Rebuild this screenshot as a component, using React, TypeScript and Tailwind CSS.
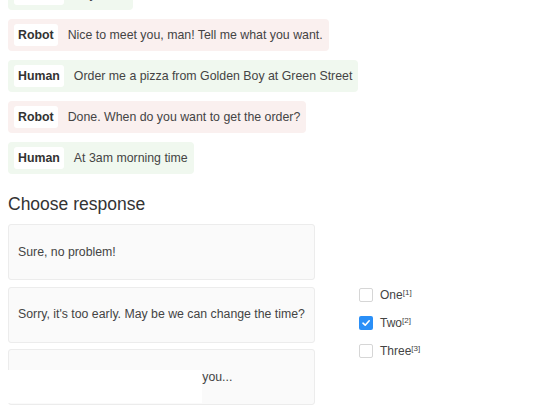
import React from "react";

type Msg = { who: "Human" | "Robot"; text: string };

const messages: Msg[] = [
  { who: "Human", text: "Hey there" },
  { who: "Robot", text: "Nice to meet you, man! Tell me what you want." },
  { who: "Human", text: "Order me a pizza from Golden Boy at Green Street" },
  { who: "Robot", text: "Done. When do you want to get the order?" },
  { who: "Human", text: "At 3am morning time" },
];

const responses = [
  "Sure, no problem!",
  "Sorry, it's too early. May be we can change the time?",
  "Ok, we will bring it at 3am. Thank you...",
];

const options = [
  { label: "One", n: 1, checked: false },
  { label: "Two", n: 2, checked: true },
  { label: "Three", n: 3, checked: false },
];

function Bubble({ msg }: { msg: Msg }) {
  const bg = msg.who === "Robot" ? "bg-[#faf0ef]" : "bg-[#f0f8ef]";
  return (
    <div className={`inline-flex items-center self-start h-8 pl-1.5 pr-1.5 rounded ${bg}`}>
      <span className="bg-white rounded-[3px] h-[22px] flex items-center px-[4px] text-[12.35px] font-bold text-[#333]">
        {msg.who}
      </span>
      <span className="ml-2.5 text-[12.35px] text-[#444]">{msg.text}</span>
    </div>
  );
}

export default function App() {
  return (
    <div className="w-[552px] h-[408px] overflow-hidden bg-white px-2 font-['Liberation_Sans',Arial,sans-serif]">
      <div className="flex flex-col gap-[9px] -mt-[22px]">
        {messages.map((m, i) => (
          <Bubble key={i} msg={m} />
        ))}
      </div>

      <h2 className="mt-[19px] text-[17.5px] leading-[22px] text-[#333]">Choose response</h2>

      <div className="mt-[9px] flex items-start">
        <div className="flex flex-col gap-[6.5px] w-[307px]">
          {responses.map((r, i) => (
            <div
              key={i}
              className="relative h-[56px] flex items-center pl-[9px] whitespace-nowrap bg-[#fafafa] border border-[#ececec] rounded-[3px] text-[12.3px] text-[#444]"
            >
              {r}
              {i === 2 && <div className="absolute left-[-9px] top-[20px] w-[202px] h-[33px] bg-white" />}
            </div>
          ))}
        </div>

        <div className="ml-[44px] mt-[64px] flex flex-col gap-[14px]">
          {options.map((o) => (
            <label key={o.n} className="flex items-center h-[14px] text-[12px] text-[#444]">
              {o.checked ? (
                <span className="w-[14px] h-[14px] rounded-[2px] bg-[#2a8ff7] flex items-center justify-center">
                  <svg width="10" height="10" viewBox="0 0 10 10" fill="none">
                    <path d="M2 5.2 L4.2 7.2 L8.2 2.8" stroke="white" strokeWidth="1.6" strokeLinecap="round" strokeLinejoin="round" />
                  </svg>
                </span>
              ) : (
                <span className="w-[14px] h-[14px] rounded-[2px] border border-[#d6d6d6] bg-white" />
              )}
              <span className="ml-[7px]">
                {o.label}
                <sup className="text-[8px]">[{o.n}]</sup>
              </span>
            </label>
          ))}
        </div>
      </div>
    </div>
  );
}
